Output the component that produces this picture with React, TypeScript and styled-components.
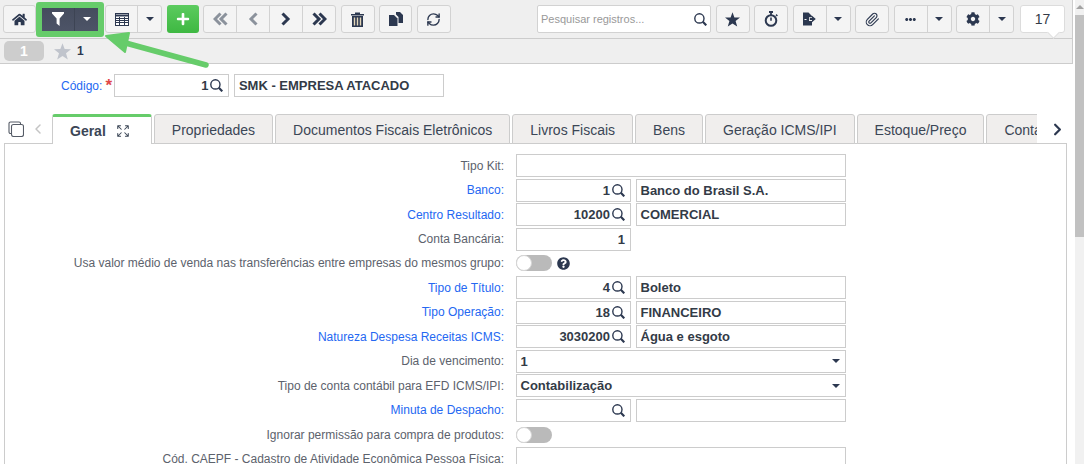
import React from "react";
import styled, { createGlobalStyle } from "styled-components";
import { FaHome, FaPlus, FaEllipsisH, FaCog, FaQuestionCircle } from "react-icons/fa";
import { LuRefreshCw, LuPaperclip, LuChevronLeft, LuChevronRight, LuExpand } from "react-icons/lu";

const GlobalStyle = createGlobalStyle`
  html, body {
    margin: 0;
    padding: 0;
    height: 464px;
    overflow: hidden;
    background: #fff;
  }
  body {
    font-family: "Liberation Sans", Arial, sans-serif;
    color: #333b47;
  }
`;

const navy = "#2c3850";
const green = "#66cc6a";

const Page = styled.div`
  position: relative;
  display: flex;
  width: 1084px;
  height: 464px;
  overflow: hidden;
`;

const Main = styled.div`
  width: 1073px;
  flex: none;
  display: flex;
  flex-direction: column;
`;

const Scrollbar = styled.div`
  flex: none;
  width: 9px;
  margin-left: 2px;
  background: #f1f1f1;
  display: flex;
  flex-direction: column;
  align-items: center;
`;

const ScrollArrow = styled.div`
  width: 0;
  height: 0;
  margin: 5px 0 6px;
  border-left: 4px solid transparent;
  border-right: 4px solid transparent;
  border-bottom: 4px solid #a3a3a3;
`;

const ScrollThumb = styled.div`
  width: 100%;
  height: 222px;
  background: #c1c1c1;
`;

const Toolbar = styled.div`
  height: 38px;
  flex: none;
  display: flex;
  align-items: center;
  gap: 4.5px;
  padding: 0 7px 0 3px;
  background: #efefef;
  border-bottom: 1px solid #ccc;
  border-right: 1px solid #ccc;
`;

const Group = styled.div`
  display: flex;
  height: 28px;
  box-sizing: border-box;
  border: 1px solid #d2d2d2;
  border-radius: 3px;
  background: #f4f4f4;
`;

const ToolButton = styled.button<{ $w?: number; $muted?: boolean }>`
  width: ${(p) => p.$w ?? 32}px;
  height: 100%;
  padding: 0;
  border: 0;
  background: transparent;
  display: flex;
  align-items: center;
  justify-content: center;
  color: ${(p) => (p.$muted ? "#8b929c" : navy)};

  & + & {
    border-left: 1px solid #d2d2d2;
  }
`;

const Highlight = styled.div`
  margin: 0 -3.5px 0 -4.5px;
  padding: 6px;
  background: ${green};
  border-radius: 3px;
  display: flex;
`;

const FilterGroup = styled.div`
  display: flex;
  height: 23px;
  background: linear-gradient(#454c5e, #4d5467);
`;

const FilterButton = styled.button<{ $w: number }>`
  width: ${(p) => p.$w}px;
  padding: 0;
  border: 0;
  background: transparent;
  color: #fff;
  display: flex;
  align-items: center;
  justify-content: center;

  & + & {
    border-left: 1px solid #3d4454;
  }
`;

const AddButton = styled.button`
  width: 32px;
  height: 28px;
  padding: 0;
  border: 0;
  border-radius: 3px;
  background: linear-gradient(#5ccb5f, #3eb842);
  color: #fff;
  display: flex;
  align-items: center;
  justify-content: center;
`;

const Spacer = styled.div`
  flex: 1;
`;

const SearchBox = styled.div`
  width: 174px;
  height: 28px;
  box-sizing: border-box;
  padding: 0 3px;
  background: #fff;
  border: 1px solid #d2d2d2;
  border-radius: 2px;
  display: flex;
  align-items: center;
  justify-content: space-between;
  font-size: 11px;
  color: #999;
`;

const CountBubble = styled.div`
  position: relative;
  width: 45px;
  height: 28px;
  margin-left: 1.5px;
  box-sizing: border-box;
  background: #fff;
  border: 1px solid #dcdcdc;
  border-radius: 3px;
  display: flex;
  align-items: center;
  justify-content: center;
  font-size: 14px;
  color: #333b47;

  &::after {
    content: "";
    position: absolute;
    right: 6px;
    bottom: -5px;
    width: 8px;
    height: 8px;
    background: #fff;
    border-right: 1px solid #dcdcdc;
    border-bottom: 1px solid #dcdcdc;
    transform: rotate(45deg);
  }
`;

const RecordBar = styled.div`
  height: 24px;
  flex: none;
  display: flex;
  align-items: center;
  padding-left: 4px;
  background: #efefef;
  border-bottom: 1px solid #ccc;
  border-right: 1px solid #ccc;
`;

const RecordPill = styled.div`
  width: 40px;
  height: 20px;
  border-radius: 5px;
  background: #cdcdcd;
  color: #fff;
  font-size: 14px;
  font-weight: bold;
  display: flex;
  align-items: center;
  justify-content: center;
`;

const RecordStar = styled.span`
  margin-left: 10px;
  display: flex;
`;

const RecordNumber = styled.span`
  margin-left: 6px;
  font-size: 12px;
  font-weight: bold;
  color: ${navy};
`;

const CodeRow = styled.div`
  display: flex;
  align-items: center;
  height: 23px;
  margin-top: 10px;
  padding-left: 61px;
`;

const CodeLabel = styled.span`
  font-size: 12px;
  color: #2468f2;
`;

const Required = styled.span`
  width: 9px;
  margin-left: 3px;
  color: #e04848;
  font-size: 17px;
  font-weight: bold;
  line-height: 12px;
`;

const TabRow = styled.div`
  display: flex;
  align-items: flex-start;
  height: 30px;
  margin-top: 17px;
  position: relative;
  z-index: 1;
`;

const TabTools = styled.div`
  width: 52px;
  flex: none;
  height: 30px;
  box-sizing: border-box;
  padding-left: 8px;
  display: flex;
  align-items: center;
  gap: 6px;
`;

const Chevron = styled.span<{ $muted?: boolean }>`
  display: flex;
  color: ${(p) => (p.$muted ? "#c4c4c4" : navy)};
`;

const TabStrip = styled.div`
  display: flex;
  gap: 2px;
  width: 985px;
  height: 30px;
  flex: none;
  overflow: hidden;
`;

const Tab = styled.div<{ $active?: boolean }>`
  flex: none;
  height: 30px;
  box-sizing: border-box;
  padding: ${(p) => (p.$active ? "1px 21px 0 17px" : "2px 17px 0")};
  display: flex;
  align-items: center;
  gap: 10px;
  font-size: 14px;
  color: #3b4656;
  font-weight: ${(p) => (p.$active ? "bold" : "normal")};
  background: ${(p) => (p.$active ? "#fff" : "#f0eeed")};
  border: 1px solid #ccc;
  border-top: ${(p) => (p.$active ? `3px solid ${green}` : "1px solid #ccc")};
  border-bottom: ${(p) => (p.$active ? "0" : "1px solid #ccc")};
  border-radius: 3px 3px 0 0;
`;

const NextTab = styled.div`
  margin-left: 11px;
  height: 30px;
  display: flex;
  align-items: center;
`;

const Panel = styled.div`
  flex: 1;
  margin: -1px 6px 0 4px;
  padding-top: 9.5px;
  border: 1px solid #ccc;
  border-bottom: 0;
`;

const FormRow = styled.div`
  height: 24.44px;
  display: flex;
  align-items: center;
`;

const Label = styled.div<{ $link?: boolean }>`
  width: 499px;
  flex: none;
  text-align: right;
  white-space: nowrap;
  font-size: 12px;
  color: ${(p) => (p.$link ? "#2468f2" : "#5c626c")};
`;

const Controls = styled.div`
  margin-left: 12px;
  display: flex;
  align-items: center;
  gap: 5px;
`;

const CodeControls = styled(Controls)`
  margin-left: 0;
`;

const Field = styled.div<{ $w: number; $right?: boolean }>`
  width: ${(p) => p.$w}px;
  height: 23px;
  box-sizing: border-box;
  padding: 0 5px 0 3.5px;
  background: #fff;
  border: 1px solid #ccc;
  display: flex;
  align-items: center;
  justify-content: ${(p) => (p.$right ? "flex-end" : "space-between")};
  gap: 2px;
  font-size: 13px;
  font-weight: bold;
  color: #333b47;
`;

const Toggle = styled.div`
  position: relative;
  width: 36px;
  height: 16px;
  border-radius: 8px;
  background: #bababa;

  &::before {
    content: "";
    position: absolute;
    left: 0;
    top: 0;
    width: 16px;
    height: 16px;
    box-sizing: border-box;
    border-radius: 50%;
    background: #fff;
    border: 1px solid #d6d6d6;
  }
`;

const Help = styled.span`
  display: flex;
  color: ${navy};
  font-size: 13px;
`;

const Caret = styled.span<{ $size?: number; $white?: boolean }>`
  display: block;
  width: 0;
  height: 0;
  border-left: ${(p) => p.$size ?? 4}px solid transparent;
  border-right: ${(p) => p.$size ?? 4}px solid transparent;
  border-top: ${(p) => p.$size ?? 4}px solid ${(p) => (p.$white ? "#fff" : navy)};
`;

const Arrow = styled.svg`
  position: absolute;
  left: 100px;
  top: 28px;
`;

const Lookup = () => (
  <svg width="13" height="13" viewBox="0 0 13 13" fill="none" stroke={navy}>
    <circle cx="5.4" cy="5.4" r="4.6" strokeWidth="1.4" />
    <path d="M8.8 8.8L12.3 12.3" strokeWidth="2.2" />
  </svg>
);

const StarIcon = ({ size = 15, color = navy }: { size?: number; color?: string }) => (
  <svg width={size} height={size} viewBox="0 0 15 15" fill={color}>
    <polygon points="7.5,0.3 9.4,5.4 15,5.6 10.6,9 12.2,14.6 7.5,11.4 2.8,14.6 4.4,9 0,5.6 5.6,5.4" />
  </svg>
);

const Funnel = () => (
  <svg width="12" height="14" viewBox="0 0 12 14" fill="#fff">
    <path d="M0 0H12V1.6L7.6 6.6V14L4.6 11.6V6.6L0 1.6Z" />
  </svg>
);

const TableIcon = () => (
  <svg width="14" height="13" viewBox="0 0 14 13" fill="none" stroke={navy}>
    <rect x="0.5" y="0.5" width="13" height="12" fill="#fff" />
    <path d="M0 2.5h14" strokeWidth="2" />
    <path d="M1 5.5h12M1 7.5h12M1 9.5h12M4.5 4v8M9.5 4v8" />
  </svg>
);

const Chevrons = ({ dir, double }: { dir: "left" | "right"; double?: boolean }) => (
  <svg width={double ? 15 : 10} height="14" viewBox={double ? "0 0 15 14" : "0 0 10 14"} fill="none" stroke="currentColor" strokeWidth="3">
    <g transform={dir === "left" ? `translate(${double ? 15 : 10} 0) scale(-1 1)` : undefined}>
      <path d="M1.5 1.5L7 7L1.5 12.5" />
      {double && <path d="M7.5 1.5L13 7L7.5 12.5" />}
    </g>
  </svg>
);

const TrashIcon = () => (
  <svg width="13" height="15" viewBox="0 0 13 15">
    <path d="M4 2V0.5H9V2H13V3.6H0V2Z" fill={navy} />
    <rect x="1" y="4" width="11" height="11" fill={navy} />
    <path d="M3.5 5.5v8M6.5 5.5v8M9.5 5.5v8" stroke="#e3d6b8" strokeWidth="1.4" />
  </svg>
);

const CopyIcon = () => (
  <svg width="14" height="14" viewBox="0 0 14 14" fill={navy}>
    <path d="M7 0H11L14 3V11H9.5V5L7 2.5Z" />
    <path d="M0 3H5L8.5 6.5V14H0Z" />
  </svg>
);

const TimerIcon = () => (
  <svg width="15" height="16" viewBox="0 0 15 16" fill="none" stroke={navy}>
    <circle cx="7" cy="9.5" r="5.3" strokeWidth="2" />
    <path d="M5 1h4M7 1v3" strokeWidth="1.8" />
    <path d="M7 6.5v3.2" strokeWidth="1.6" />
    <path d="M12 3.6l1.4 1.4" strokeWidth="1.5" />
  </svg>
);

const ExportIcon = () => (
  <svg width="13" height="14" viewBox="0 0 13 14">
    <path d="M0 0.5H5.5L9 4V5.2H6V9H9V13.5H0Z" fill={navy} />
    <path d="M6.8 5.9H9V3.8L12.8 7L9 10.2V8.1H6.8Z" fill={navy} />
    <path d="M1.5 7.5h2" stroke="#f4f4f4" strokeWidth="1" />
  </svg>
);

const ClonesIcon = () => (
  <svg width="16" height="16" viewBox="0 0 16 16" fill="none" stroke="#555b66" strokeWidth="1.1">
    <path d="M3.5 12.5H2.5A1.5 1.5 0 0 1 1 11V2.5A1.5 1.5 0 0 1 2.5 1H11A1.5 1.5 0 0 1 12.5 2.5V3.5" />
    <rect x="3.5" y="3.5" width="12" height="12" rx="2" fill="#fff" />
  </svg>
);

const tabs = [
  "Propriedades",
  "Documentos Fiscais Eletrônicos",
  "Livros Fiscais",
  "Bens",
  "Geração ICMS/IPI",
  "Estoque/Preço",
  "Contabilidade",
];

const App: React.FC = () => {
  return (
    <Page>
      <GlobalStyle />
      <Main>
        <Toolbar>
          <Group>
            <ToolButton $w={31}>
              <FaHome size={15} />
            </ToolButton>
          </Group>
          <Highlight>
            <FilterGroup>
              <FilterButton $w={32}>
                <Funnel />
              </FilterButton>
              <FilterButton $w={24}>
                <Caret $white />
              </FilterButton>
            </FilterGroup>
          </Highlight>
          <Group>
            <ToolButton $w={31}>
              <TableIcon />
            </ToolButton>
            <ToolButton $w={24}>
              <Caret />
            </ToolButton>
          </Group>
          <AddButton>
            <FaPlus size={14} />
          </AddButton>
          <Group>
            <ToolButton $muted>
              <Chevrons dir="left" double />
            </ToolButton>
            <ToolButton $muted $w={33}>
              <Chevrons dir="left" />
            </ToolButton>
            <ToolButton $w={33}>
              <Chevrons dir="right" />
            </ToolButton>
            <ToolButton $w={33}>
              <Chevrons dir="right" double />
            </ToolButton>
          </Group>
          <Group>
            <ToolButton>
              <TrashIcon />
            </ToolButton>
          </Group>
          <Group>
            <ToolButton $w={31}>
              <CopyIcon />
            </ToolButton>
          </Group>
          <Group>
            <ToolButton>
              <LuRefreshCw size={15} strokeWidth={2.2} />
            </ToolButton>
          </Group>
          <Spacer />
          <SearchBox>
            Pesquisar registros...
            <Lookup />
          </SearchBox>
          <Group>
            <ToolButton>
              <StarIcon />
            </ToolButton>
          </Group>
          <Group>
            <ToolButton>
              <TimerIcon />
            </ToolButton>
          </Group>
          <Group>
            <ToolButton>
              <ExportIcon />
            </ToolButton>
            <ToolButton $w={24}>
              <Caret />
            </ToolButton>
          </Group>
          <Group>
            <ToolButton>
              <LuPaperclip size={15} strokeWidth={1.8} />
            </ToolButton>
          </Group>
          <Group>
            <ToolButton>
              <FaEllipsisH size={11} />
            </ToolButton>
            <ToolButton $w={24}>
              <Caret />
            </ToolButton>
          </Group>
          <Group>
            <ToolButton>
              <FaCog size={14} />
            </ToolButton>
            <ToolButton $w={24}>
              <Caret />
            </ToolButton>
          </Group>
          <CountBubble>17</CountBubble>
        </Toolbar>

        <RecordBar>
          <RecordPill>1</RecordPill>
          <RecordStar>
            <StarIcon size={17} color="#c0c4cc" />
          </RecordStar>
          <RecordNumber>1</RecordNumber>
        </RecordBar>

        <CodeRow>
          <CodeLabel>Código:</CodeLabel>
          <Required>*</Required>
          <CodeControls>
            <Field $w={115} $right>
              1
              <Lookup />
            </Field>
            <Field $w={210}>SMK - EMPRESA ATACADO</Field>
          </CodeControls>
        </CodeRow>

        <TabRow>
          <TabTools>
            <ClonesIcon />
            <Chevron $muted>
              <LuChevronLeft size={16} strokeWidth={2.2} />
            </Chevron>
          </TabTools>
          <TabStrip>
            <Tab $active>
              Geral
              <LuExpand size={14} strokeWidth={1.8} />
            </Tab>
            {tabs.map((t) => (
              <Tab key={t}>{t}</Tab>
            ))}
          </TabStrip>
          <NextTab>
            <Chevron>
              <LuChevronRight size={19} strokeWidth={2.8} />
            </Chevron>
          </NextTab>
        </TabRow>

        <Panel>
          <FormRow>
            <Label>Tipo Kit:</Label>
            <Controls>
              <Field $w={330} />
            </Controls>
          </FormRow>
          <FormRow>
            <Label $link>Banco:</Label>
            <Controls>
              <Field $w={115} $right>
                1
                <Lookup />
              </Field>
              <Field $w={210}>Banco do Brasil S.A.</Field>
            </Controls>
          </FormRow>
          <FormRow>
            <Label $link>Centro Resultado:</Label>
            <Controls>
              <Field $w={115} $right>
                10200
                <Lookup />
              </Field>
              <Field $w={210}>COMERCIAL</Field>
            </Controls>
          </FormRow>
          <FormRow>
            <Label>Conta Bancária:</Label>
            <Controls>
              <Field $w={115} $right>
                1
              </Field>
            </Controls>
          </FormRow>
          <FormRow>
            <Label>Usa valor médio de venda nas transferências entre empresas do mesmos grupo:</Label>
            <Controls>
              <Toggle />
              <Help>
                <FaQuestionCircle />
              </Help>
            </Controls>
          </FormRow>
          <FormRow>
            <Label $link>Tipo de Título:</Label>
            <Controls>
              <Field $w={115} $right>
                4
                <Lookup />
              </Field>
              <Field $w={210}>Boleto</Field>
            </Controls>
          </FormRow>
          <FormRow>
            <Label $link>Tipo Operação:</Label>
            <Controls>
              <Field $w={115} $right>
                18
                <Lookup />
              </Field>
              <Field $w={210}>FINANCEIRO</Field>
            </Controls>
          </FormRow>
          <FormRow>
            <Label $link>Natureza Despesa Receitas ICMS:</Label>
            <Controls>
              <Field $w={115} $right>
                3030200
                <Lookup />
              </Field>
              <Field $w={210}>Água e esgoto</Field>
            </Controls>
          </FormRow>
          <FormRow>
            <Label>Dia de vencimento:</Label>
            <Controls>
              <Field $w={330}>
                1
                <Caret $size={4.5} />
              </Field>
            </Controls>
          </FormRow>
          <FormRow>
            <Label>Tipo de conta contábil para EFD ICMS/IPI:</Label>
            <Controls>
              <Field $w={330}>
                Contabilização
                <Caret $size={4.5} />
              </Field>
            </Controls>
          </FormRow>
          <FormRow>
            <Label $link>Minuta de Despacho:</Label>
            <Controls>
              <Field $w={115} $right>
                <Lookup />
              </Field>
              <Field $w={210} />
            </Controls>
          </FormRow>
          <FormRow>
            <Label>Ignorar permissão para compra de produtos:</Label>
            <Controls>
              <Toggle />
            </Controls>
          </FormRow>
          <FormRow>
            <Label>Cód. CAEPF - Cadastro de Atividade Econômica Pessoa Física:</Label>
            <Controls>
              <Field $w={330} />
            </Controls>
          </FormRow>
        </Panel>
      </Main>
      <Scrollbar>
        <ScrollArrow />
        <ScrollThumb />
      </Scrollbar>
      <Arrow width="112" height="42" viewBox="0 0 112 42">
        <path d="M6 8 L29 5 L25 24 Z" fill={green} stroke={green} strokeWidth="2" strokeLinejoin="round" />
        <path d="M22 14 L106 37" stroke={green} strokeWidth="5.5" strokeLinecap="round" />
      </Arrow>
    </Page>
  );
};

export default App;
